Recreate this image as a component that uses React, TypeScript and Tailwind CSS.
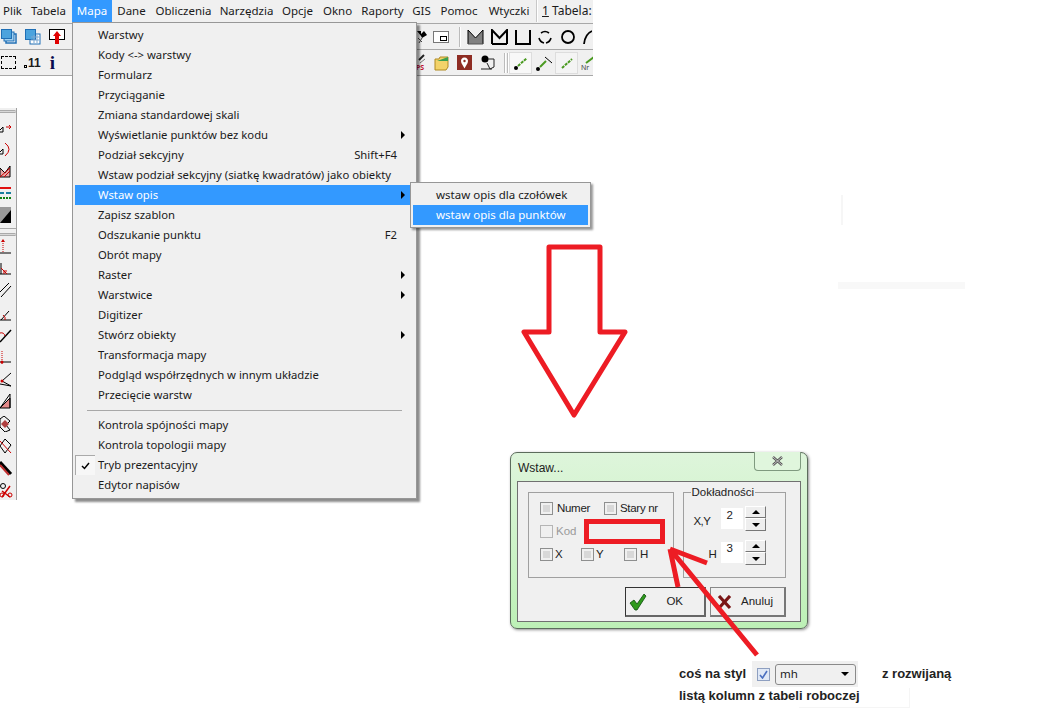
import React from 'react';

const RED = '#ed1c24';

const topMenu: [string, string][] = [
    ['Plik', 'w-[25px]'], ['Tabela', 'w-[47px]'], ['Mapa', 'w-[40px]'], ['Dane', 'w-[39px]'], ['Obliczenia', 'w-[65px]'],
    ['Narzędzia', 'w-[61px]'], ['Opcje', 'w-[41px]'], ['Okno', 'w-[39px]'], ['Raporty', 'w-[51px]'], ['GIS', 'w-[27px]'],
    ['Pomoc', 'w-[48px]'], ['Wtyczki', 'w-[52px]'],
];

type MenuRow = { label: string; shortcut?: string; sub?: boolean; active?: boolean; check?: boolean; sep?: boolean };

const menuRows: MenuRow[] = [
    { label: 'Warstwy' },
    { label: 'Kody <-> warstwy' },
    { label: 'Formularz' },
    { label: 'Przyciąganie' },
    { label: 'Zmiana standardowej skali' },
    { label: 'Wyświetlanie punktów bez kodu', sub: true },
    { label: 'Podział sekcyjny', shortcut: 'Shift+F4' },
    { label: 'Wstaw podział sekcyjny (siatkę kwadratów) jako obiekty' },
    { label: 'Wstaw opis', sub: true, active: true },
    { label: 'Zapisz szablon' },
    { label: 'Odszukanie punktu', shortcut: 'F2' },
    { label: 'Obrót mapy' },
    { label: 'Raster', sub: true },
    { label: 'Warstwice', sub: true },
    { label: 'Digitizer' },
    { label: 'Stwórz obiekty', sub: true },
    { label: 'Transformacja mapy' },
    { label: 'Podgląd współrzędnych w innym układzie' },
    { label: 'Przecięcie warstw', sep: true },
    { label: 'Kontrola spójności mapy' },
    { label: 'Kontrola topologii mapy' },
    { label: 'Tryb prezentacyjny', check: true },
    { label: 'Edytor napisów' },
];

const Grip = () => <div className="h-[3px] mx-0 bg-[#d8d8d8] border-t border-b border-[#aaaaaa] rounded-r-sm" />;

// icons of the cut-off left toolbar, every one 16x16
const leftIcons: React.ReactNode[] = [
    <><path d="M-2 13 L3 8 V13 Z" fill="none" stroke="#000" /><path d="M6 8 H11" stroke="#c00" /><path d="M9 6 L11 8 L9 10" stroke="#c00" fill="none" /></>,
    <><path d="M-2 13 L3 8 V13 Z" fill="none" stroke="#000" /><path d="M5 2 Q13 8 5 15" stroke="#c00" fill="none" /></>,
    <><path d="M0 5 L5 10 L10 3 L10 14 H0 Z" fill="#e7a8a8" stroke="#000" /><path d="M0 14 L10 5 M4 14 L10 8" stroke="#c00" /></>,
    <><path d="M0 3 H11" stroke="#e01010" strokeWidth="2" /><path d="M0 8 H4 M6 8 H11" stroke="#1b7fa0" strokeWidth="2" /><path d="M0 13 H11" stroke="#108010" strokeWidth="2" strokeDasharray="2 1" /></>,
    <><rect x="0" y="0" width="11" height="16" fill="#999" /><path d="M0 16 L11 3 V16 Z" fill="#000" /></>,
];

const leftIcons2: React.ReactNode[] = [
    <><path d="M0 15 H11" stroke="#000" /><path d="M3 5 V14" stroke="#c00" strokeDasharray="1 1" /><path d="M1 4 L3 1 L5 4 Z" fill="#c00" /></>,
    <><path d="M-2 14 H11 M1 14 V3" stroke="#000" /><path d="M1 8 L7 14 M4 14 V11 H7" stroke="#c00" fill="none" /></>,
    <path d="M0 10 L9 1 M1 15 L11 4" stroke="#000" />,
    <><path d="M-2 15 H11 M1 15 L9 6" stroke="#000" /><path d="M3 10 Q6 12 5 15" stroke="#c00" fill="none" /></>,
    <><path d="M0 15 L11 3" stroke="#000" strokeWidth="1.5" /><path d="M0 6 Q4 5 5 9" stroke="#c00" fill="none" /></>,
    <><path d="M-2 13 H11" stroke="#000" /><path d="M2 2 V16" stroke="#c00" strokeDasharray="1 1" /><circle cx="2" cy="13" r="1.5" fill="#c00" /></>,
    <><path d="M0 13 L11 15 M2 10 L11 2 M2 10 L11 15" stroke="#000" fill="none" /><circle cx="2" cy="10" r="1.5" fill="#c00" /></>,
    <><path d="M0 15 L10 5 V15 Z" fill="#e38a8a" stroke="#000" /><path d="M10 1 V15 M10 1 L0 15" stroke="#000" /></>,
    <><path d="M0 3 L4 0 L10 5 L6 9 L10 14 L5 16 L0 11 Z" fill="none" stroke="#000" /><path d="M1 8 L5 4 L9 8 L5 12 Z" fill="#b04040" /></>,
    <><path d="M0 8 L5 1 L11 7 L5 15 Z" fill="none" stroke="#000" /><path d="M0 3 L11 15" stroke="#c00" /></>,
    <><path d="M0 2 L11 14" stroke="#000" strokeWidth="3" /><path d="M0 5 L9 15" stroke="#c03030" strokeWidth="2" /></>,
    <><circle cx="3" cy="4" r="2.5" fill="none" stroke="#000" /><path d="M2 9 L10 15 M10 4 L2 15" stroke="#c00" strokeWidth="1.5" /><circle cx="2" cy="13" r="2" fill="none" stroke="#c00" /><circle cx="10" cy="13" r="2" fill="none" stroke="#c00" /></>,
];

const Ic = ({ children, w = 16, h = 16 }: { children: React.ReactNode; w?: number; h?: number }) => (
    <svg width={w} height={h} viewBox={`0 0 ${w} ${h}`} className="shrink-0 block">{children}</svg>
);

const PolyIcon = ({ fill }: { fill?: boolean }) => (
    <Ic w={17} h={16}><path d="M1 15 V1 L8.5 9 L16 1 V15" fill={fill ? '#808080' : 'none'} stroke="#000" strokeWidth={fill ? 1 : 2} />{!fill && <path d="M1 15 H16" stroke="#000" strokeWidth="2" />}{fill && <path d="M1 15 H16" stroke="#555" />}</Ic>
);

const Check = ({ disabled }: { disabled?: boolean }) => (
    <span className={`block w-[13px] h-[13px] border shrink-0 p-[2px] ${disabled ? 'border-[#b5b5b5] bg-[#f0f0f0]' : 'border-[#8e8f8f] bg-[#f0f0f0]'}`}>
        {!disabled && <span className="block w-full h-full bg-[#d8d8d8]" />}
    </span>
);

const Spin = () => (
    <div className="flex flex-col gap-0 w-[21px] h-[25px]">
        <div className="h-[12px] bg-[#eeeeee] border-t border-l border-white border-r border-b border-r-[#777] border-b-[#777] flex items-center justify-center">
            <span className="w-0 h-0 border-l-[4px] border-r-[4px] border-b-[4px] border-l-transparent border-r-transparent border-b-black" />
        </div>
        <div className="h-[13px] bg-[#eeeeee] border-t border-l border-white border-r border-b border-r-[#777] border-b-[#777] flex items-center justify-center">
            <span className="w-0 h-0 border-l-[4px] border-r-[4px] border-t-[4px] border-l-transparent border-r-transparent border-t-black" />
        </div>
    </div>
);

const App: React.FC = () => {
    return (
        <div className="relative w-[1054px] h-[726px] bg-white overflow-hidden font-['Noto_Sans',sans-serif] text-[11.3px] text-[#1a1a1a]">
            {/* main window, cut off at the right */}
            <div className="w-[593px] flex flex-col">
                <div className="h-[23px] bg-[#f0f0f0] flex items-stretch overflow-hidden whitespace-nowrap text-[11.5px]">
                    {topMenu.map(([name, w]) => (
                        <div key={name} className={`${w} flex items-center justify-center h-[22px] ${name === 'Mapa' ? 'bg-[#3399ff] text-white' : ''}`}>{name}</div>
                    ))}
                    <div className="ml-[1px] h-[22px] w-[2px] border-l border-r border-[#c8c8c8] border-r-white mr-[4px]" />
                    <div className="flex items-center h-[22px] text-[12px]"><span className="underline">1</span>&nbsp;Tabela:</div>
                </div>

                <div className="h-[27px] bg-[#f0f0f0] border-t border-b border-[#a8a8a8] flex items-center overflow-hidden">
                    <div className="w-[72px] shrink-0 flex items-center pl-[1px] gap-[8px]">
                        <Ic><rect x="5" y="5" width="10" height="9" fill="#fff" stroke="#1f6fb5" strokeWidth="1.5" /><rect x="3" y="3" width="10" height="9" fill="#9fd0f0" stroke="#1f6fb5" /><rect x="0.5" y="0.5" width="10" height="9" fill="#4ba3dd" stroke="#1f6fb5" /></Ic>
                        <Ic><rect x="5" y="5" width="10" height="10" fill="#fff" stroke="#1f6fb5" /><rect x="0.5" y="0.5" width="10" height="10" fill="#4ba3dd" stroke="#1f6fb5" /><path d="M6 8 H14 M6 11 H14 M9 6 V14 M12 6 V14" stroke="#7aa7d0" /></Ic>
                        <Ic><rect x="0.5" y="0.5" width="15" height="10" fill="#fff" stroke="#000" /><path d="M8 2 L12 7 H10 V15 H6 V7 H4 Z" fill="#e00000" /></Ic>
                    </div>
                    <div className="ml-[344px] flex items-center shrink-0">
                        <Ic w={12} h={16}><path d="M1 2 H5 L5 5 L8 2 L11 6 L6 9 L5 7 Z" fill="#000" /><path d="M2 9 L6 13 M6 9 L3 14" stroke="#444" /></Ic>
                        <div className="ml-[5px] w-[16px] h-[12px] bg-white border border-[#777] flex items-end justify-end p-[1px]"><span className="block w-[7px] h-[5px] border border-black" /></div>
                        <div className="ml-[10px] w-[2px] h-[20px] border-l border-r border-[#bbbbbb] border-r-white" />
                        <div className="ml-[6px] flex items-center gap-[7px]">
                            <PolyIcon fill />
                            <PolyIcon />
                            <Ic w={17} h={16}><path d="M1 1 V15 H15 V1" fill="none" stroke="#000" strokeWidth="2" /></Ic>
                            <div className="-ml-[2px]"><Ic><path d="M4 4 Q8 1 12 4 M2 9 Q3 13 7 14 M14 9 Q13 13 9 14" fill="none" stroke="#000" strokeWidth="1.6" /></Ic></div>
                            <Ic><circle cx="8" cy="8" r="6" fill="none" stroke="#000" strokeWidth="1.8" /></Ic>
                            <Ic w={9} h={16}><path d="M1 15 Q2 5 9 2" fill="none" stroke="#000" strokeWidth="1.8" /></Ic>
                        </div>
                    </div>
                </div>

                <div className="h-[26px] bg-[#f0f0f0] border-b border-[#a8a8a8] flex items-center overflow-hidden">
                    <div className="w-[72px] shrink-0 flex items-center pl-[1px]">
                        <span className="block w-[15px] h-[13px] border border-dashed border-black" />
                        <span className="ml-[8px] font-bold text-[12px] leading-none flex items-end font-['Liberation_Sans',sans-serif]"><span className="w-[3px] h-[3px] border border-black mb-[1px] mr-[1px]" />11</span>
                        <span className="ml-[9px] font-['Liberation_Serif',serif] font-bold text-[19px] leading-none text-[#0a0a50]">i</span>
                    </div>
                    <div className="ml-[344px] flex items-center shrink-0">
                        <Ic w={10} h={18}><path d="M3 6 L8 1" stroke="#222" strokeWidth="2" /><path d="M4 9 L9 5" stroke="#777" /><text x="0" y="16" fontSize="7" fontWeight="700" fill="#c01030">PS</text></Ic>
                        <div className="ml-[8px]"><Ic w={15} h={16}><path d="M1 4 H5 L6 2 H14 V12 L12 15 H1 Z" fill="#f3d36a" stroke="#b08a20" /><path d="M3 6 L14 2 V6 Z" fill="#3aa050" /></Ic></div>
                        <div className="ml-[8px] w-[15px] h-[15px] bg-[#8e2c23] flex items-center justify-center"><Ic w={9} h={12}><path d="M4.5 0.5 C7 0.5 8 2.5 8 4 C8 6.5 5.5 9 4.5 11.5 C3.5 9 1 6.5 1 4 C1 2.5 2 0.5 4.5 0.5 Z" fill="#fff" /><circle cx="4.5" cy="4" r="1.2" fill="#8e2c23" /></Ic></div>
                        <div className="ml-[8px]"><Ic w={15} h={16}><circle cx="5" cy="4" r="3.5" fill="#000" /><path d="M1 14 H12 M8 4 H14 V12 L10 14 L7 8" fill="none" stroke="#222" /></Ic></div>
                        <div className="ml-[9px] w-[2px] h-[20px] border-l border-r border-[#bbbbbb] border-r-white" />
                        <div className="ml-[1px] w-[2px] h-[20px] border-l border-r border-[#bbbbbb] border-r-white" />
                        <div className="flex items-center gap-[3px]">
                            <div className="w-[23px] h-[22px] bg-[#f8f8f8] border border-[#dddddd] flex items-center justify-center"><Ic><circle cx="3" cy="13" r="2" fill="#000" /><path d="M5 11 L14 3" stroke="#4a9a20" strokeWidth="2" strokeDasharray="3 1" /></Ic></div>
                            <Ic w={17} h={16}><circle cx="3" cy="14" r="2" fill="#000" /><path d="M5 12 L11 6" stroke="#4a9a20" strokeWidth="2" /><path d="M10 2 L17 8" stroke="#000" /></Ic>
                            <div className="w-[23px] h-[22px] bg-[#f4f4f4] border border-[#dddddd] flex items-center justify-center"><Ic w={12} h={12}><path d="M1 11 L11 2" stroke="#4a9a20" strokeWidth="2" strokeDasharray="3 1" /></Ic></div>
                            <Ic w={13} h={16}><text x="0" y="15" fontSize="7" fill="#444">Nr</text><path d="M5 8 L13 2" stroke="#4a9a20" strokeWidth="2" /></Ic>
                        </div>
                    </div>
                </div>

                {/* cut-off left toolbar */}
                <div className="mt-[32px] w-[17px] h-[392px] bg-[#f0f0f0] border-r border-[#a0a0a0] flex flex-col">
                    <div className="h-[5px] flex flex-col justify-end"><Grip /></div>
                    <div className="flex flex-col gap-[6px] mt-[1px] pt-[5px] h-[112px]">
                        {leftIcons.map((icon, i) => <Ic key={i}>{icon}</Ic>)}
                    </div>
                    <div className="h-[1px] bg-[#a8a8a8] mt-[2px]" />
                    <div className="mt-[4px]"><Grip /></div>
                    <div className="flex flex-col gap-[6.2px] mt-[2px]">
                        {leftIcons2.map((icon, i) => <Ic key={i}>{icon}</Ic>)}
                    </div>
                </div>
            </div>

            {/* Mapa dropdown */}
            <div className="absolute left-[72px] top-[22px] w-[345px] h-[477px] bg-[#f0f0f0] border border-[#979797] shadow-[3px_3px_2px_rgba(0,0,0,0.45)] pt-[2px] px-[2px] whitespace-nowrap">
                {menuRows.map(row => (
                    <React.Fragment key={row.label}>
                        <div className={`relative h-[20px] flex items-center pl-[23px] pr-[17px] ${row.active ? 'bg-[#3399ff] text-white' : ''}`}>
                            {row.check && (
                                <span className="absolute left-0 top-0 w-[20px] h-[20px] bg-[#f7f7f7] border-l border-t border-[#aaaaaa] flex items-center justify-center text-[#000]">
                                    <svg width="9" height="8" viewBox="0 0 9 8"><path d="M1 4 L3.5 6.5 L8 1" fill="none" stroke="#000" strokeWidth="1.5" /></svg>
                                </span>
                            )}
                            <span>{row.label}</span>
                            {row.shortcut && <span className="ml-auto">{row.shortcut}</span>}
                            {row.sub && <span className="absolute right-[9px] top-[6px] w-0 h-0 border-t-[4px] border-b-[4px] border-l-[4px] border-t-transparent border-b-transparent border-l-[#000]" />}
                        </div>
                        {row.sep && <div className="h-[1px] bg-[#a8a8a8] ml-[12px] mr-[12px] my-[5px] mb-[4px]" />}
                    </React.Fragment>
                ))}
            </div>

            {/* Wstaw opis submenu */}
            <div className="absolute left-[410px] top-[182px] w-[181px] h-[46px] bg-[#f0f0f0] border border-[#979797] shadow-[2px_2px_2px_rgba(0,0,0,0.4)] p-[2px] whitespace-nowrap text-[11.5px]">
                <div className="h-[20px] flex items-center pl-[23px]">wstaw opis dla czołówek</div>
                <div className="h-[20px] flex items-center pl-[23px] bg-[#3399ff] text-white">wstaw opis dla punktów</div>
            </div>

            {/* big hollow arrow */}
            <svg className="absolute left-[515px] top-[240px]" width="120" height="185" viewBox="515 240 120 185">
                <path d="M549 247 H600 V332 H625 L574 415 L524 332 H549 Z" fill="none" stroke={RED} strokeWidth="5" strokeLinejoin="round" />
            </svg>

            {/* Wstaw... dialog */}
            <div className="absolute left-[510px] top-[452px] w-[298px] h-[177px] rounded-[7px] bg-gradient-to-b from-[#def5db] to-[#bdf0b6] border border-[#5c6c5c] shadow-[1px_1px_3px_rgba(0,0,0,0.45)] px-[6px] pb-[6px] flex flex-col text-[#222] font-['Liberation_Sans',sans-serif] text-[11.5px] whitespace-nowrap">
                <div className="h-[28px] flex items-start shrink-0">
                    <span className="mt-[6px] ml-[1px] text-[12px]">Wstaw...</span>
                    <div className="ml-auto w-[47px] h-[19px] -mt-[1px] border border-t-0 border-[#7f9a7f] rounded-b-[4px] bg-[#e0f6dd] flex items-center justify-center">
                        <svg width="11" height="10" viewBox="0 0 11 10"><path d="M1 1 L10 9 M10 1 L1 9" stroke="#555" strokeWidth="2.4" /><path d="M1 1 L10 9 M10 1 L1 9" stroke="#ddd" strokeWidth="0.8" /></svg>
                    </div>
                </div>
                <div className="flex-1 bg-[#f0f0f0] border border-[#707070] pl-[10px] pr-[14px] pt-[10px]">
                    <div className="flex gap-[9px]">
                        <div className="w-[147px] h-[86px] border border-[#a0a0a0] px-[11px] pt-[9px] flex flex-col gap-[10px]">
                            <div className="flex items-center h-[13px]">
                                <Check /><span className="ml-[4px] w-[47px] tracking-[-0.3px]">Numer</span>
                                <Check /><span className="ml-[3px] tracking-[-0.3px]">Stary nr</span>
                            </div>
                            <div className="flex items-center h-[13px]">
                                <Check disabled /><span className="ml-[3px] text-[#9a9a9a]">Kod</span>
                            </div>
                            <div className="flex items-center h-[13px]">
                                <Check /><span className="ml-[2px] w-[26px]">X</span>
                                <Check /><span className="ml-[2px] w-[28px]">Y</span>
                                <Check /><span className="ml-[3px]">H</span>
                            </div>
                        </div>
                        <div className="relative w-[103px] h-[86px] border border-[#a0a0a0] pt-[15px]">
                            <span className="absolute left-[7px] -top-[9px] bg-[#f0f0f0] pr-[1px]">Dokładności</span>
                            <div className="flex items-start">
                                <span className="w-[37px] pl-[9px] pt-[5px] tracking-[-0.5px]">X,Y</span>
                                <div className="w-[22px] h-[21px] bg-white pl-[5px] leading-[15px]">2</div>
                                <div className="ml-[2px] -mt-[2px]"><Spin /></div>
                            </div>
                            <div className="flex items-start mt-[11px]">
                                <span className="w-[37px] pl-[24px] pt-[4px]">H</span>
                                <div className="w-[22px] h-[21px] bg-white pl-[5px] leading-[13px]">3</div>
                                <div className="ml-[2px] -mt-[2px]"><Spin /></div>
                            </div>
                        </div>
                    </div>
                    <div className="flex justify-end gap-[4px] mt-[9px]">
                        <div className="relative w-[81px] h-[30px] bg-[#f0f0f0] border border-[#333] border-r-[2px] border-b-[2px] border-r-[#666] border-b-[#666] flex items-center justify-end pr-[21px]">
                            <svg className="absolute left-[3px] top-[4px]" width="18" height="19" viewBox="0 0 18 19"><path d="M1 11 L5 8 L8 12 L15 2 L17 4 L8 18 L6 18 Z" fill="#2f9a1c" stroke="#0b4d0b" strokeWidth="0.8" /></svg>
                            <span>OK</span>
                        </div>
                        <div className="relative w-[76px] h-[30px] bg-[#f0f0f0] border border-[#888] border-r-[2px] border-b-[2px] border-r-[#777] border-b-[#777] flex items-center justify-end pr-[11px]">
                            <svg className="absolute left-[6px] top-[7px]" width="15" height="15" viewBox="0 0 15 15"><path d="M2 1 L13 13 M13 1 L2 13" stroke="#7a1616" strokeWidth="3.2" /></svg>
                            <span>Anuluj</span>
                        </div>
                    </div>
                </div>
            </div>

            {/* annotations drawn over the dialog */}
            <svg className="absolute left-[580px] top-[515px]" width="185" height="145" viewBox="580 515 185 145">
                <rect x="586.5" y="521.5" width="76" height="20" fill="none" stroke={RED} strokeWidth="5" />
                <path d="M670 549 L757 655 M670 549 L707 563 M670 549 L678 587" fill="none" stroke={RED} strokeWidth="5" />
            </svg>

            {/* pasted note at the bottom */}
            <div className="absolute left-[799px] top-[688px] w-[111px] h-[20px] border-r border-b border-[#f5f5f5]" />
            <div className="absolute left-[679px] top-[661px] w-[280px] font-['Liberation_Sans',sans-serif] font-bold text-[13px] leading-[20px] text-[#222]">
                <div className="flex items-center h-[26px]">
                    <span className="w-[73px] whitespace-nowrap">coś na styl</span>
                    <div className="w-[106px] h-[26px] bg-[#f0f0f0] flex items-center pl-[5px]">
                        <span className="w-[13px] h-[13px] bg-[#dfe8f6] border border-[#8e9fc0] flex items-center justify-center">
                            <svg width="9" height="9" viewBox="0 0 9 9"><path d="M1 5 L3.5 8 L8 1" fill="none" stroke="#4a6fc0" strokeWidth="1.6" /></svg>
                        </span>
                        <div className="ml-[5px] w-[81px] h-[21px] bg-[#f0f0f0] border border-[#8a8a8a] rounded-[3px] flex items-center pl-[4px] pr-[6px] font-['Noto_Sans',sans-serif] font-normal text-[11.5px] text-[#222]">
                            mh
                            <span className="ml-auto w-0 h-0 border-l-[4px] border-r-[4px] border-t-[4px] border-l-transparent border-r-transparent border-t-black" />
                        </div>
                    </div>
                    <span className="ml-[24px] whitespace-nowrap">z rozwijaną</span>
                </div>
                <div className="whitespace-nowrap -mt-[1px]">listą kolumn z tabeli roboczej</div>
            </div>

            {/* faint leftovers of the pasted picture */}
            <div className="absolute left-[841px] top-[195px] w-[2px] h-[30px] bg-[#f6f6f6]" />
            <div className="absolute left-[838px] top-[282px] w-[127px] h-[7px] bg-[#f8f8f8]" />
        </div>
    );
};

export default App;
